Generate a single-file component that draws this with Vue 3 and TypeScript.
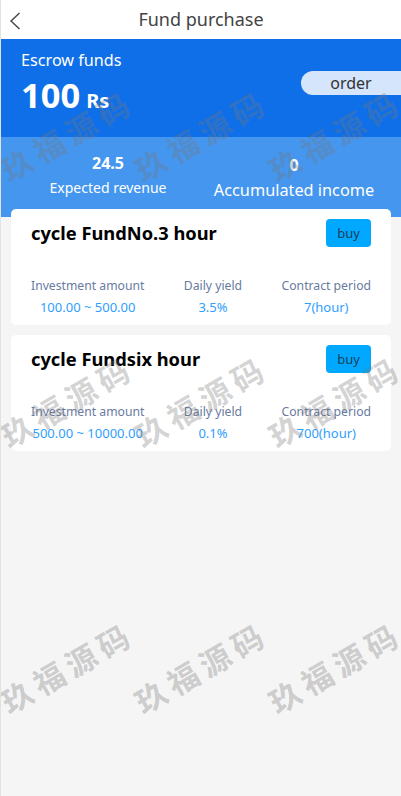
<script setup lang="ts">
const funds = [
  { name: 'cycle FundNo.3 hour', range: '100.00 ~ 500.00', rate: '3.5%', period: '7(hour)' },
  { name: 'cycle Fundsix hour', range: '500.00 ~ 10000.00', rate: '0.1%', period: '700(hour)' },
]
const marks = Array(9).fill('玖福源码')
</script>

<template>
  <div class="page">
    <header class="nav">
      <svg class="back" width="14" height="18" viewBox="0 0 14 18">
        <path d="M10.5 1 L2 9 L10.5 17" fill="none" stroke="#444" stroke-width="1.4" />
      </svg>
      <span class="navTitle">Fund purchase</span>
    </header>

    <section class="hero">
      <div class="heroTop">
        <div>
          <p class="heroLabel">Escrow funds</p>
          <p class="heroAmount">100<small>Rs</small></p>
        </div>
        <div class="orderPill">order</div>
      </div>
      <div class="heroStats">
        <div class="stat">
          <b>24.5</b>
          <span>Expected revenue</span>
        </div>
        <div class="stat statWide">
          <b>0</b>
          <span>Accumulated income</span>
        </div>
      </div>
    </section>

    <main class="list">
      <div v-for="fund in funds" :key="fund.name" class="card">
        <div class="cardHead">
          <h2>{{ fund.name }}</h2>
          <div class="buyBtn">buy</div>
        </div>
        <div class="cardCols">
          <div class="col">
            <span>Investment amount</span>
            <em>{{ fund.range }}</em>
          </div>
          <div class="col">
            <span>Daily yield</span>
            <em>{{ fund.rate }}</em>
          </div>
          <div class="col">
            <span>Contract period</span>
            <em>{{ fund.period }}</em>
          </div>
        </div>
      </div>
    </main>

    <div class="marks">
      <div v-for="(mark, index) in marks" :key="index" class="mark">{{ mark }}</div>
    </div>
  </div>
</template>

<style>
html, body {
  margin: 0;
  background: #f5f5f5;
}
</style>

<style scoped>
.page {
  position: relative;
  box-sizing: border-box;
  width: 401px;
  height: 796px;
  overflow: hidden;
  border-left: 1px solid #e2e2e2;
  background: #f5f5f5;
  font-family: "Noto Sans", "Noto Sans CJK SC", sans-serif;
}

p, h2 {
  margin: 0;
}

.nav {
  position: relative;
  display: flex;
  height: 39px;
  align-items: center;
  justify-content: center;
  background: #fff;
}

.back {
  position: absolute;
  left: 8px;
  top: 12px;
}

.navTitle {
  margin-top: -2px;
  font-size: 18px;
  color: #444;
}

.hero {
  background: #0f6fe8;
  color: #fff;
}

.heroTop {
  display: flex;
  height: 98px;
  box-sizing: border-box;
  padding: 11px 0 0 20px;
  justify-content: space-between;
}

.heroLabel {
  font-size: 16.2px;
  line-height: 20px;
}

.heroAmount {
  margin-top: 2px;
  font-size: 34.5px;
  line-height: 46px;
  font-weight: 700;
}

.heroAmount small {
  margin-left: 6px;
  font-size: 20px;
}

.orderPill {
  width: 100px;
  height: 24px;
  margin-top: 21px;
  border-radius: 12px 0 0 12px;
  background: #d5e5fb;
  color: #333;
  font-size: 16px;
  line-height: 25px;
  text-align: center;
}

.heroStats {
  display: flex;
  height: 80px;
  background: #4496ef;
}

.stat {
  display: flex;
  width: 214px;
  padding-top: 15px;
  flex-direction: column;
  align-items: center;
  font-size: 14px;
}

.stat b {
  font-size: 16px;
  line-height: 22px;
}

.stat span {
  line-height: 27px;
}

.statWide {
  width: 186px;
  margin-left: -14px;
  padding-top: 17px;
  font-size: 16.3px;
}

.statWide span {
  line-height: 28px;
}

.list {
  display: flex;
  margin-top: -8px;
  padding: 0 10px;
  flex-direction: column;
  gap: 10px;
}

.card {
  position: relative;
  height: 116px;
  box-sizing: border-box;
  padding: 10px 20px;
  border-radius: 5px;
  background: #fff;
}

.cardHead {
  display: flex;
  height: 28px;
  align-items: center;
  justify-content: space-between;
}

.cardHead h2 {
  margin-top: -2px;
  font-size: 18.3px;
  font-weight: 700;
  color: #000;
}

.buyBtn {
  width: 45px;
  height: 28px;
  border-radius: 4px;
  background: #00a8ff;
  color: #1a4058;
  font-size: 13px;
  line-height: 28px;
  text-align: center;
}

.cardCols {
  display: flex;
  margin-top: 28px;
  justify-content: space-between;
}

.col {
  display: flex;
  flex-direction: column;
  align-items: center;
  font-size: 12.2px;
  line-height: 22px;
}

.col span {
  color: #687a9f;
}

.col em {
  font-style: normal;
  font-size: 13px;
  line-height: 20px;
  color: #2f9eff;
}

.marks {
  position: absolute;
  top: 0;
  left: -1px;
  display: grid;
  grid-template-columns: repeat(3, 134px);
  grid-auto-rows: 266px;
  pointer-events: none;
}

.mark {
  justify-self: center;
  align-self: start;
  margin-top: 113px;
  color: rgba(120, 120, 120, 0.33);
  font-family: "Noto Sans CJK SC", sans-serif;
  font-size: 31px;
  line-height: 44px;
  font-weight: 700;
  letter-spacing: 6px;
  white-space: nowrap;
  transform: rotate(-30deg);
}
</style>
